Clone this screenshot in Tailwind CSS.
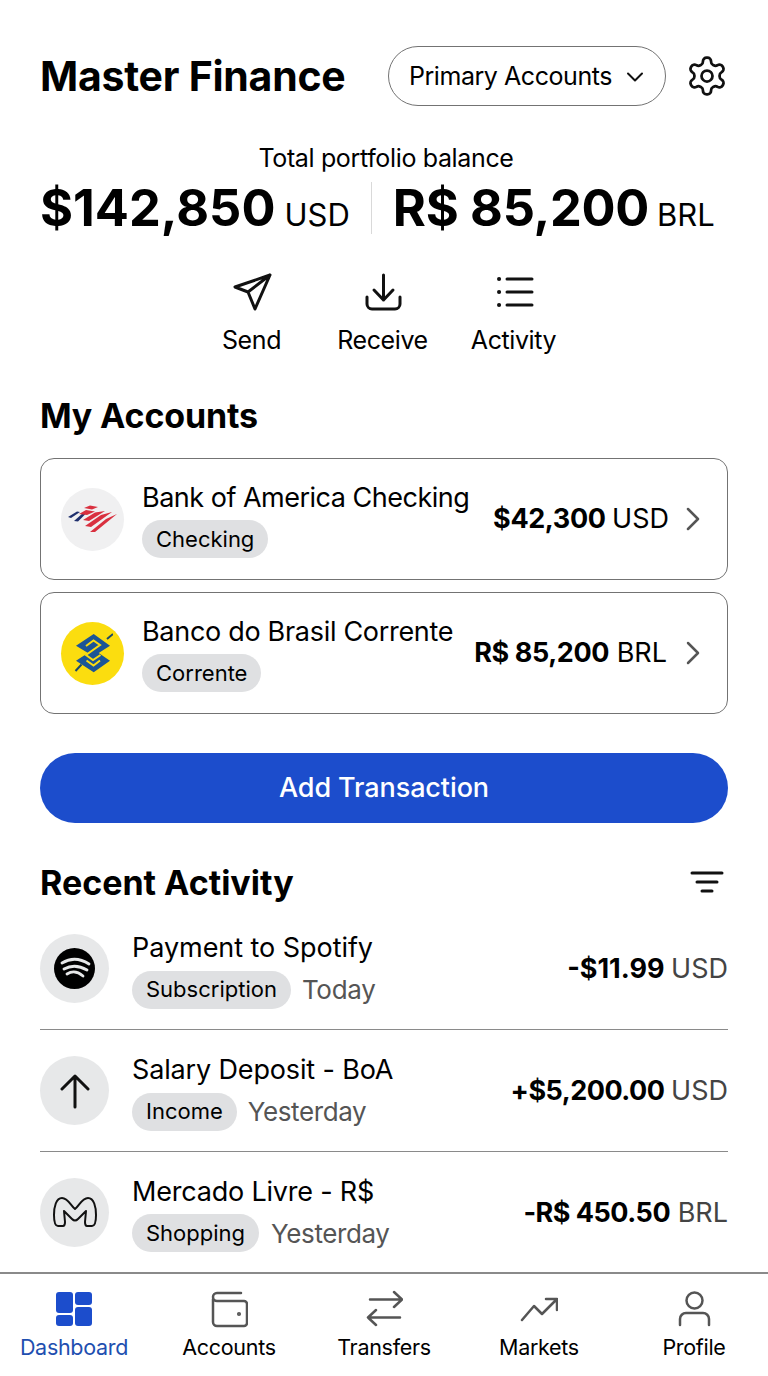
<!doctype html>
<html>
  <head>
    <meta charset="UTF-8" />
    <title>Master Finance</title>
    <script src="https://cdn.jsdelivr.net/npm/@tailwindcss/browser@4"></script>
  </head>
  <body class="bg-white text-black font-['Inter',sans-serif]">
    <div class="w-[768px] h-[1376px] overflow-hidden flex flex-col">
      <main class="h-[1272px] px-10 pt-[46px] overflow-hidden">
        <!-- header -->
        <div class="flex items-center h-[60px] whitespace-nowrap">
          <h1 class="w-[305px] shrink-0 text-[41px] font-bold tracking-[-0.25px] leading-none">Master Finance</h1>
          <button class="ml-[43px] w-[278px] shrink-0 h-[60px] rounded-full border border-[#737373] flex items-center pl-5 pt-[1px] text-[25px] tracking-[-0.45px]">
            Primary Accounts
            <svg class="ml-[13px]" width="20" height="20" viewBox="0 0 20 20" fill="none" stroke="#111" stroke-width="2" stroke-linecap="round" stroke-linejoin="round"><path d="M3 6.500l7 7 7-7" /></svg>
          </button>
          <svg class="ml-[19px] shrink-0" width="44" height="44" viewBox="0 0 24 24" fill="none" stroke="#111" stroke-width="1.500" stroke-linecap="round" stroke-linejoin="round"><path d="M12.220 2h-.44a2 2 0 0 0-2 2v.18a2 2 0 0 1-1 1.730l-.43.25a2 2 0 0 1-2 0l-.15-.08a2 2 0 0 0-2.730.73l-.22.38a2 2 0 0 0 .73 2.730l.15.1a2 2 0 0 1 1 1.720v.51a2 2 0 0 1-1 1.740l-.15.09a2 2 0 0 0-.73 2.730l.22.38a2 2 0 0 0 2.730.73l.15-.08a2 2 0 0 1 2 0l.43.25a2 2 0 0 1 1 1.730V20a2 2 0 0 0 2 2h.44a2 2 0 0 0 2-2v-.18a2 2 0 0 1 1-1.730l.43-.25a2 2 0 0 1 2 0l.15.08a2 2 0 0 0 2.730-.73l.22-.39a2 2 0 0 0-.73-2.730l-.15-.08a2 2 0 0 1-1-1.740v-.5a2 2 0 0 1 1-1.740l.15-.09a2 2 0 0 0 .73-2.730l-.22-.38a2 2 0 0 0-2.730-.73l-.15.08a2 2 0 0 1-2 0l-.43-.25a2 2 0 0 1-1-1.730V4a2 2 0 0 0-2-2z" /><circle cx="12" cy="12" r="3" /></svg>
        </div>

        <!-- balance -->
        <p class="mt-[37px] pl-1 text-center text-[25px] leading-[30px] tracking-[-0.35px]">Total portfolio balance</p>
        <div class="mt-[2px] flex items-center h-[66px] whitespace-nowrap">
          <span class="text-[50.500px] font-bold leading-none">$142,850</span>
          <span class="ml-[9px] mt-[12px] text-[31px] leading-none">USD</span>
          <span class="mx-[21px] w-px h-[52px] bg-[#d9d9d9]"></span>
          <span class="text-[50.500px] font-bold leading-none tracking-[-0.3px]">R$ 85,200</span>
          <span class="ml-2 mt-[12px] text-[31px] leading-none">BRL</span>
        </div>

        <!-- quick actions -->
        <div class="mt-[31px] pr-[3px] flex justify-center items-start tracking-[-0.4px]">
          <div class="w-[131px] flex flex-col items-center">
            <svg width="40" height="40" viewBox="0 0 40 40" fill="none" stroke="#111" stroke-width="3" stroke-linecap="round" stroke-linejoin="round"><path d="M38 3L3 15l13 5 7 17zM38 3L16 20" /></svg>
            <span class="mt-[13px] text-[25px] leading-[30px]">Send</span>
          </div>
          <div class="w-[131px] flex flex-col items-center">
            <svg width="40" height="40" viewBox="0 0 40 40" fill="none" stroke="#111" stroke-width="3" stroke-linecap="round" stroke-linejoin="round"><path d="M20.500 3v25M11 18l9.500 10 9.500-10M4 25v7a5 5 0 0 0 5 5h23a5 5 0 0 0 5-5v-7" /></svg>
            <span class="mt-[13px] text-[25px] leading-[30px]">Receive</span>
          </div>
          <div class="w-[131px] flex flex-col items-center">
            <svg width="40" height="40" viewBox="0 0 40 40" fill="none" stroke="#111" stroke-width="3" stroke-linecap="round"><path d="M13 7h25M13 20h25M13 33h25" /><path d="M5 7h.1M5 20h.1M5 33h.1" stroke-width="4" /></svg>
            <span class="mt-[13px] text-[25px] leading-[30px]">Activity</span>
          </div>
        </div>

        <!-- accounts -->
        <h2 class="mt-[41px] text-[34px] font-bold leading-[40px] tracking-[-0.15px]">My Accounts</h2>
        <div class="mt-[22px] flex flex-col gap-3">
          <div class="h-[122px] rounded-[14px] border border-[#737373] flex items-center pl-5 pr-[25px]">
            <div class="w-[63px] h-[63px] rounded-full bg-[#f0f0f1] flex items-center justify-center shrink-0">
              <svg width="50" height="28" viewBox="0 0 50 28"><path d="M0 12L9 6.500l3 .5-9 6zM6 16l9-8h3.500L10 16.500z" fill="#1f2f6d" /><path d="M16 3L22 .5 30 2l-6 2.500zM11 9l7-4 9 1.500L19 10zM15 15L27 7.500 37 6 21 16zM17 21L33 10l11-3L23 22zM22 27L38 14l11-5L27 27z" fill="#d9303f" /></svg>
            </div>
            <div class="ml-[18px] flex-1 pt-[2px]">
              <p class="text-[27px] leading-[32px] tracking-[-0.5px]">Bank of America Checking</p>
              <span class="mt-[6px] inline-flex h-[38px] items-center rounded-full bg-[#dfe0e2] px-[14px] text-[22px]">Checking</span>
            </div>
            <p class="pt-[1px] text-[27px] whitespace-nowrap"><span class="font-bold tracking-[-0.4px]">$42,300</span> <span class="-ml-[1px]">USD</span></p>
            <svg class="ml-[15px]" width="18" height="26" viewBox="0 0 18 26" fill="none" stroke="#555" stroke-width="2.500" stroke-linecap="round" stroke-linejoin="round"><path d="M4 3l10 10L4 23" /></svg>
          </div>
          <div class="h-[122px] rounded-[14px] border border-[#737373] flex items-center pl-5 pr-[25px]">
            <div class="w-[63px] h-[63px] rounded-full bg-[#fbdd0f] flex items-center justify-center shrink-0">
              <svg width="40" height="42" viewBox="-2 -1 40 42"><path d="M18.700 1L35 12.700 23.700 20 35 27.700 18.700 39.300 1 27.700 13 20 1 12.700z" fill="#1b5596" /><path d="M11 13l7.500-5.500 6.500 4.500-14 10 7 5 7.500-5M25 27.500l-6.500 5-7-5" fill="none" stroke="#fbdd0f" stroke-width="2" /><path d="M32 6l6-5M0.500 38l6-6.500" stroke="#1b4a6b" stroke-width="2" /></svg>
            </div>
            <div class="ml-[18px] flex-1 pt-[2px]">
              <p class="text-[27px] leading-[32px] tracking-[-0.3px]">Banco do Brasil Corrente</p>
              <span class="mt-[6px] inline-flex h-[38px] items-center rounded-full bg-[#dfe0e2] px-[14px] text-[22px]">Corrente</span>
            </div>
            <p class="text-[27px] whitespace-nowrap"><span class="font-bold tracking-[-0.4px]">R$ 85,200</span> BRL</p>
            <svg class="ml-[17px]" width="18" height="26" viewBox="0 0 18 26" fill="none" stroke="#555" stroke-width="2.500" stroke-linecap="round" stroke-linejoin="round"><path d="M4 3l10 10L4 23" /></svg>
          </div>
        </div>

        <button class="mt-[39px] w-full h-[70px] rounded-full bg-[#1c4dcc] text-white text-[27px] font-medium tracking-[-0.1px]">Add Transaction</button>

        <!-- recent activity -->
        <div class="mt-[40px] flex items-center justify-between h-[40px]">
          <h2 class="text-[34px] font-bold leading-[40px]">Recent Activity</h2>
          <svg class="mr-[4px]" width="34" height="26" viewBox="0 0 34 26" fill="none" stroke="#111" stroke-width="3" stroke-linecap="round"><path d="M2 3h30M7 12h20M12 21h10" /></svg>
        </div>

        <div class="mt-[5px]">
          <div class="h-[122px] border-b border-[#8a8a8a] flex items-center">
            <div class="w-[69px] h-[69px] rounded-full bg-[#e7e8e9] flex items-center justify-center shrink-0">
              <svg width="41" height="41" viewBox="0 0 41 41"><circle cx="20.500" cy="20.500" r="20.500" fill="#000" /><path d="M8 15Q21 7 35 16M10 21Q21 15 33 22M13 26Q21 21 29 28" fill="none" stroke="#e7e8e9" stroke-width="2.800" stroke-linecap="round" /></svg>
            </div>
            <div class="ml-[23px] flex-1 pt-1">
              <p class="text-[27px] leading-[32px] tracking-[-0.05px]">Payment to Spotify</p>
              <div class="mt-[6px] flex items-center">
                <span class="inline-flex h-[38px] items-center rounded-full bg-[#dfe0e2] px-[14px] text-[22px]">Subscription</span>
                <span class="ml-[11px] text-[26px] text-[#555] tracking-[-0.3px]">Today</span>
              </div>
            </div>
            <p class="pt-[2px] text-[27px] whitespace-nowrap"><span class="font-bold">-$11.99</span> <span class="-ml-[1px] text-[#444]">USD</span></p>
          </div>
          <div class="h-[122px] border-b border-[#8a8a8a] flex items-center">
            <div class="w-[69px] h-[69px] rounded-full bg-[#e7e8e9] flex items-center justify-center shrink-0">
              <svg width="30" height="36" viewBox="0 0 30 36" fill="none" stroke="#111" stroke-width="3" stroke-linecap="round" stroke-linejoin="round"><path d="M15 34V3M2 16L15 3l13 13" /></svg>
            </div>
            <div class="ml-[23px] flex-1 pt-1">
              <p class="text-[27px] leading-[32px] tracking-[-0.15px]">Salary Deposit - BoA</p>
              <div class="mt-[6px] flex items-center">
                <span class="inline-flex h-[38px] items-center rounded-full bg-[#dfe0e2] px-[14px] text-[22px]">Income</span>
                <span class="ml-[11px] text-[26px] text-[#555] tracking-[-0.4px]">Yesterday</span>
              </div>
            </div>
            <p class="pt-[2px] text-[27px] whitespace-nowrap"><span class="font-bold tracking-[-0.5px]">+$5,200.00</span> <span class="-ml-[1px] text-[#444]">USD</span></p>
          </div>
          <div class="h-[120px] flex items-center">
            <div class="w-[69px] h-[69px] rounded-full bg-[#e7e8e9] flex items-center justify-center shrink-0">
              <svg width="44" height="32" viewBox="0 0 44 32" fill="none" stroke="#111" stroke-width="2" stroke-linejoin="round"><path d="M9 2C3 2 1 11 1 19c0 6 1 11 4 11h5c2 0 2-2 2-4l-1-11 8 8c2 2 4 2 6 0l8-8-1 11c0 2 0 4 2 4h5c3 0 4-5 4-11C43 11 41 2 35 2c-6 0-9 8-13 11C18 10 15 2 9 2z" /></svg>
            </div>
            <div class="ml-[23px] flex-1 pt-[4px]">
              <p class="text-[27px] leading-[32px] tracking-[-0.2px]">Mercado Livre - R$</p>
              <div class="mt-[6px] flex items-center">
                <span class="inline-flex h-[38px] items-center rounded-full bg-[#dfe0e2] px-[14px] text-[22px]">Shopping</span>
                <span class="ml-3 text-[26px] text-[#555] tracking-[-0.4px]">Yesterday</span>
              </div>
            </div>
            <p class="pt-[2px] text-[27px] whitespace-nowrap"><span class="font-bold tracking-[-0.5px]">-R$ 450.50</span> <span class="text-[#444]">BRL</span></p>
          </div>
        </div>
      </main>

      <!-- bottom nav -->
      <nav class="h-[104px] border-t-2 border-[#8a8a8a] flex justify-center pt-4 text-[21.500px] leading-[28px] tracking-[-0.3px]">
        <div class="w-[155px] shrink-0 flex flex-col items-center">
          <svg width="38" height="38" viewBox="0 0 38 38" fill="#1c4dcc"><rect x="1" y="2" width="17" height="21" rx="3" /><rect x="20" y="2" width="17" height="13" rx="3" /><rect x="1" y="25" width="17" height="11" rx="3" /><rect x="20" y="17" width="17" height="19" rx="3" /></svg>
          <span class="mt-[5px] text-[#1e4fb0]">Dashboard</span>
        </div>
        <div class="w-[155px] shrink-0 flex flex-col items-center">
          <svg width="38" height="38" viewBox="0 0 38 38" fill="none" stroke="#555" stroke-width="2.500" stroke-linecap="round" stroke-linejoin="round"><path d="M3 9V32a4 4 0 0 0 4 4h27a3 3 0 0 0 3-3V14a3 3 0 0 0-3-3H7a4 4 0 0 1-4-4 4 4 0 0 1 4-4h24" /><circle cx="29" cy="24" r="0.800" fill="#555" /></svg>
          <span class="mt-[5px]">Accounts</span>
        </div>
        <div class="w-[155px] shrink-0 flex flex-col items-center">
          <svg width="38" height="38" viewBox="0 0 38 38" fill="none" stroke="#555" stroke-width="2.500" stroke-linecap="round" stroke-linejoin="round"><path d="M5 9.500h31M29 2l8 7.500-8 7.500M35 27.500H3M11 20l-8 7.500 8 7.500" /></svg>
          <span class="mt-[5px]">Transfers</span>
        </div>
        <div class="w-[155px] shrink-0 flex flex-col items-center">
          <svg width="38" height="38" viewBox="0 0 38 38" fill="none" stroke="#555" stroke-width="2.500" stroke-linecap="round" stroke-linejoin="round"><path d="M2 30l12-14 8 8L37 9M26 9h11v11" /></svg>
          <span class="mt-[5px]">Markets</span>
        </div>
        <div class="w-[155px] shrink-0 flex flex-col items-center">
          <svg width="38" height="38" viewBox="0 0 38 38" fill="none" stroke="#555" stroke-width="2.500" stroke-linecap="round" stroke-linejoin="round"><circle cx="19.500" cy="10.500" r="8" /><path d="M5 35v-6a6 6 0 0 1 6-6h17a6 6 0 0 1 6 6v6" /></svg>
          <span class="mt-[5px]">Profile</span>
        </div>
      </nav>
    </div>
  </body>
</html>
